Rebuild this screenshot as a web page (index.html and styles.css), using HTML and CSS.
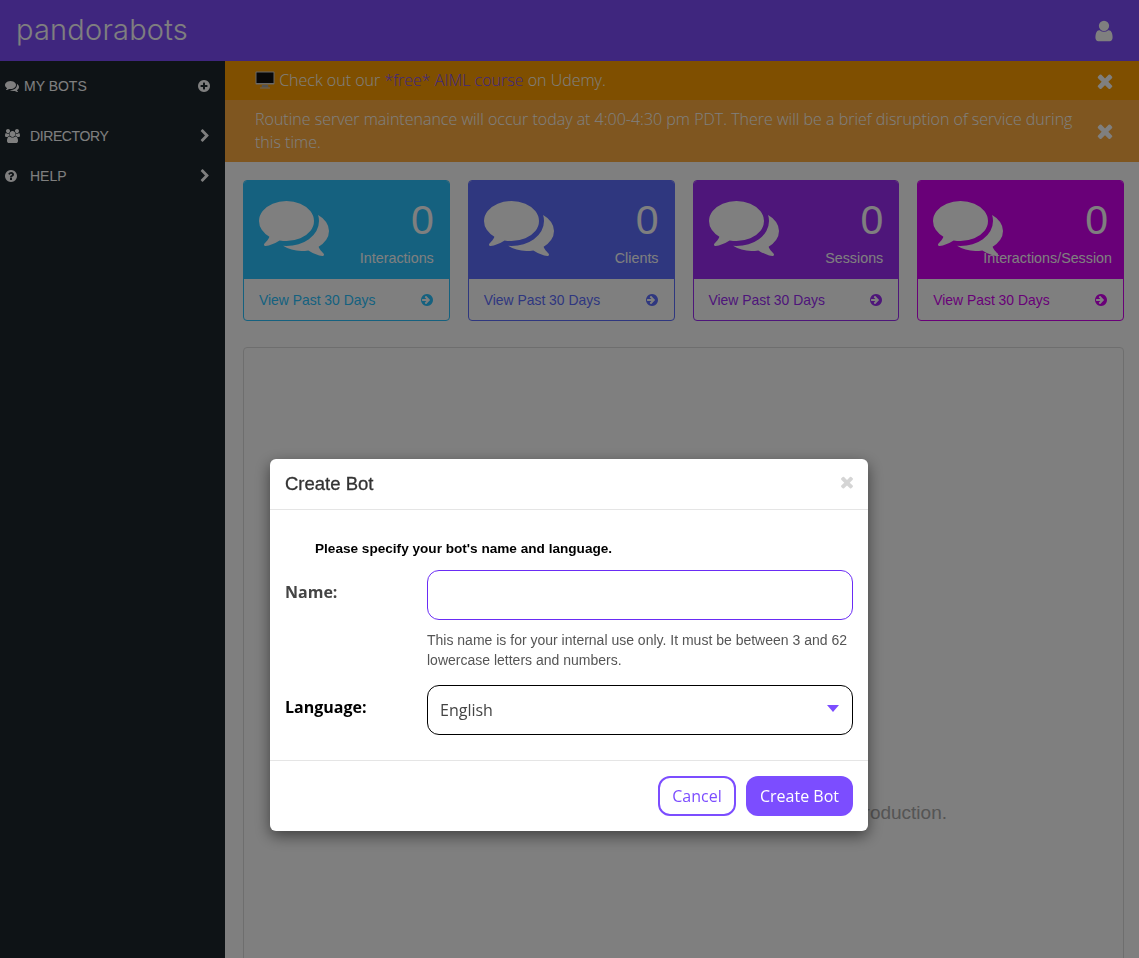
FILE: index.html
```html
<!DOCTYPE html>
<html>
	<head>
		<meta charset="UTF-8">
		<title>Pandorabots</title>
		<link rel="stylesheet" href="styles.css">
	</head>
	<body>
		<svg class="defs">
			<symbol id="i-comments" viewBox="0 0 1792 1792"><path d="M1408 768q0 139-94 257t-256.500 186.500-353.500 68.500q-86 0-176-16-124 88-278 128-36 9-86 16h-3q-11 0-20.500-8t-11.500-21q-1-3-1-6.500t.5-6.500 2-6l2.500-5 3.500-5.500 4-5 4.500-5 4-4.500q5-6 23-25t26-29.500 22.500-29 25-38.500 20.500-44q-124-72-195-177t-71-224q0-139 94-257t256.500-186.500 353.500-68.500 353.500 68.500 256.500 186.500 94 257zm384 256q0 120-71 224.500t-195 176.500q10 24 20.500 44t25 38.500 22.500 29 26 29.500 23 25q1 1 4 4.500t4.500 5 4 5 3.500 5.500l2.500 5 2 6 .5 6.500-1 6.500q-3 14-13 22t-22 7q-50-7-86-16-154-40-278-128-90 16-176 16-271 0-472-132 58 4 88 4 161 0 309-45t264-129q125-92 192-212t67-254q0-77-23-152 129 71 204 178t75 230z"/></symbol>
			<symbol id="i-plus" viewBox="0 0 1792 1792"><path d="M1344 960v-128q0-26-19-45t-45-19h-256v-256q0-26-19-45t-45-19h-128q-26 0-45 19t-19 45v256h-256q-26 0-45 19t-19 45v128q0 26 19 45t45 19h256v256q0 26 19 45t45 19h128q26 0 45-19t19-45v-256h256q26 0 45-19t19-45zm320-64q0 209-103 385.500t-279.500 279.500-385.500 103-385.500-103-279.500-279.500-103-385.500 103-385.500 279.500-279.500 385.500-103 385.500 103 279.500 279.500 103 385.500z"/></symbol>
			<symbol id="i-users" viewBox="0 0 1920 1792"><path d="M593 896q-162 5-265 128h-134q-82 0-138-40.500t-56-118.500q0-353 124-353 6 0 43.500 21t97.500 42.500 119 21.500q67 0 133-23-5 37-5 66 0 139 81 256zm1071 637q0 120-73 189.500t-194 69.500h-874q-121 0-194-69.500t-73-189.500q0-53 3.500-103.500t14-109 26.500-108.500 43-97.500 62-81 85.500-53.500 111.500-20q10 0 43 21.500t73 48 107 48 135 21.500 135-21.500 107-48 73-48 43-21.500q61 0 111.500 20t85.500 53.500 62 81 43 97.500 26.500 108.500 14 109 3.500 103.500zm-1024-1277q0 106-75 181t-181 75-181-75-75-181 75-181 181-75 181 75 75 181zm704 384q0 159-112.500 271.500t-271.500 112.500-271.500-112.500-112.500-271.500 112.500-271.500 271.500-112.500 271.500 112.500 112.500 271.500zm576 225q0 78-56 118.500t-138 40.500h-134q-103-123-265-128 81-117 81-256 0-29-5-66 66 23 133 23 59 0 119-21.500t97.500-42.500 43.500-21q124 0 124 353zm-128-609q0 106-75 181t-181 75-181-75-75-181 75-181 181-75 181 75 75 181z"/></symbol>
			<symbol id="i-chevron" viewBox="0 0 1792 1792"><path d="M1363 877l-742 742q-19 19-45 19t-45-19l-166-166q-19-19-19-45t19-45l531-531-531-531q-19-19-19-45t19-45l166-166q19-19 45-19t45 19l742 742q19 19 19 45t-19 45z"/></symbol>
			<symbol id="i-question" viewBox="0 0 1792 1792"><path d="M1024 1376v-192q0-14-9-23t-23-9h-192q-14 0-23 9t-9 23v192q0 14 9 23t23 9h192q14 0 23-9t9-23zm256-672q0-88-55.500-163t-138.500-116-170-41q-243 0-371 213-15 24 8 42l132 100q7 6 19 6 16 0 25-12 53-68 86-92 34-24 86-24 48 0 85.500 26t37.500 59q0 38-20 61t-68 45q-63 28-115.500 86.500t-52.500 125.500v36q0 14 9 23t23 9h192q14 0 23-9t9-23q0-19 21.500-49.500t54.500-49.500q32-18 49-28.500t46-35 44.500-48 28-60.500 12.500-81zm384 192q0 209-103 385.500t-279.500 279.500-385.500 103-385.500-103-279.500-279.500-103-385.500 103-385.500 279.500-279.500 385.500-103 385.500 103 279.500 279.500 103 385.500z"/></symbol>
			<symbol id="i-user" viewBox="0 0 1792 1792"><path d="M1536 1399q0 109-62.500 187t-150.500 78h-854q-88 0-150.500-78t-62.500-187q0-85 8.500-160.500t31.500-152 58.500-131 94-89 134.500-34.500q131 128 313 128t313-128q76 0 134.500 34.500t94 89 58.500 131 31.500 152 8.500 160.500zm-256-887q0 159-112.500 271.500t-271.500 112.500-271.500-112.500-112.500-271.500 112.500-271.500 271.500-112.500 271.500 112.500 112.500 271.500z"/></symbol>
			<symbol id="i-times" viewBox="0 0 1792 1792"><path d="M1490 1322q0 40-28 68l-136 136q-28 28-68 28t-68-28l-294-294-294 294q-28 28-68 28t-68-28l-136-136q-28-28-28-68t28-68l294-294-294-294q-28-28-28-68t28-68l136-136q28-28 68-28t68 28l294 294 294-294q28-28 68-28t68 28l136 136q28 28 28 68t-28 68l-294 294 294 294q28 28 28 68z"/></symbol>
			<symbol id="i-arrow" viewBox="0 0 1792 1792"><path d="M1285 896q0-27-18-45l-91-91-362-362q-18-18-45-18t-45 18l-91 91q-18 18-18 45t18 45l189 189h-502q-26 0-45 19t-19 45v128q0 26 19 45t45 19h502l-189 189q-19 19-19 45t19 45l91 91q18 18 45 18t45-18l362-362 91-91q18-18 18-45zm379 0q0 209-103 385.500t-279.500 279.500-385.500 103-385.500-103-279.500-279.500-103-385.500 103-385.500 279.500-279.500 385.500-103 385.500 103 279.500 279.500 103 385.500z"/></symbol>
		</svg>

		<header class="topbar">
			<span class="logo">pandorabots</span>
			<svg class="user-icon"><use href="#i-user"/></svg>
		</header>

		<div class="layout">
			<!--sidebar-->
			<nav class="sidebar">
				<div class="nav-item nav-bots">
					<svg class="nav-icon"><use href="#i-comments"/></svg>
					<span class="nav-label">MY BOTS</span>
					<svg class="nav-add"><use href="#i-plus"/></svg>
				</div>
				<div class="nav-item nav-directory">
					<svg class="nav-icon nav-icon-wide"><use href="#i-users"/></svg>
					<span class="nav-label">DIRECTORY</span>
					<svg class="nav-chevron"><use href="#i-chevron"/></svg>
				</div>
				<div class="nav-item nav-help">
					<svg class="nav-icon nav-icon-help"><use href="#i-question"/></svg>
					<span class="nav-label">HELP</span>
					<svg class="nav-chevron"><use href="#i-chevron"/></svg>
				</div>
			</nav>

			<main class="content">
				<!--alerts-->
				<div class="alert alert-course">
					<p>
						<svg class="monitor" viewBox="0 0 20 18">
							<rect x="0.5" y="0.5" width="19" height="13" rx="1" fill="#cfcfcf"/>
							<rect x="1.5" y="1.5" width="17" height="10.500" fill="#111"/>
							<path d="M7 14h6l.5 2.500h-7z" fill="#a5a5a5"/>
							<rect x="5" y="16.500" width="10" height="1" fill="#c8c8c8"/>
						</svg>
						Check out our <a href="#">*free* AIML course</a> on Udemy.
					</p>
					<svg class="alert-close"><use href="#i-times"/></svg>
				</div>
				<div class="alert alert-notice">
					<p>Routine server maintenance will occur today at 4:00-4:30 pm PDT. There will be a brief disruption of service during this time.</p>
					<svg class="alert-close"><use href="#i-times"/></svg>
				</div>

				<!--stat cards-->
				<div class="stats">
					<div class="card card-cyan">
						<div class="card-top">
							<svg class="card-icon"><use href="#i-comments"/></svg>
							<div class="card-value">0</div>
							<div class="card-label">Interactions</div>
						</div>
						<div class="card-foot">
							<span>View Past 30 Days</span>
							<svg class="card-arrow"><use href="#i-arrow"/></svg>
						</div>
					</div>
					<div class="card card-blue">
						<div class="card-top">
							<svg class="card-icon"><use href="#i-comments"/></svg>
							<div class="card-value">0</div>
							<div class="card-label">Clients</div>
						</div>
						<div class="card-foot">
							<span>View Past 30 Days</span>
							<svg class="card-arrow"><use href="#i-arrow"/></svg>
						</div>
					</div>
					<div class="card card-purple">
						<div class="card-top">
							<svg class="card-icon"><use href="#i-comments"/></svg>
							<div class="card-value">0</div>
							<div class="card-label">Sessions</div>
						</div>
						<div class="card-foot">
							<span>View Past 30 Days</span>
							<svg class="card-arrow"><use href="#i-arrow"/></svg>
						</div>
					</div>
					<div class="card card-magenta">
						<div class="card-top">
							<svg class="card-icon"><use href="#i-comments"/></svg>
							<div class="card-value">0</div>
							<div class="card-label">Interactions/Session</div>
						</div>
						<div class="card-foot">
							<span>View Past 30 Days</span>
							<svg class="card-arrow"><use href="#i-arrow"/></svg>
						</div>
					</div>
				</div>

				<div class="panel">
					<p class="panel-text">production.</p>
				</div>
			</main>
		</div>

		<!--create bot dialog-->
		<div class="overlay">
			<div class="modal">
				<div class="modal-head">
					<h4>Create Bot</h4>
					<svg class="modal-close"><use href="#i-times"/></svg>
				</div>
				<div class="modal-body">
					<p class="intro">Please specify your bot's name and language.</p>
					<div class="field field-name">
						<label class="field-label">Name:</label>
						<div class="field-main">
							<input class="text-input" type="text">
							<p class="help">This name is for your internal use only. It must be between 3 and 62 lowercase letters and numbers.</p>
						</div>
					</div>
					<div class="field field-language">
						<label class="field-label">Language:</label>
						<div class="field-main">
							<div class="select">
								<span>English</span>
								<span class="caret"></span>
							</div>
						</div>
					</div>
				</div>
				<div class="modal-foot">
					<button class="btn btn-cancel">Cancel</button>
					<button class="btn btn-create">Create Bot</button>
				</div>
			</div>
		</div>
	</body>
</html>
```

FILE: styles.css
```css
* {
	box-sizing: border-box;
}
html, body {
	height: 100%;
}
body {
	margin: 0;
	overflow: hidden;
	background: #fff;
	font-family: "Liberation Sans", Arial, sans-serif;
	color: #333;
}
p, h4 {
	margin: 0;
}
.defs {
	display: none;
}
svg {
	fill: currentColor;
	display: block;
}

/* top bar */
.topbar {
	height: 61px;
	background: #7e4dfc;
	color: #fff;
	display: flex;
	align-items: center;
	justify-content: space-between;
	padding: 0 23px 0 16px;
}
.logo {
	font-family: Inter, sans-serif;
	font-size: 29px;
	font-weight: 300;
	letter-spacing: 0.2px;
	position: relative;
	top: -1px;
}
.user-icon {
	width: 24px;
	height: 24px;
}

.layout {
	display: flex;
	height: calc(100% - 61px);
}

/* sidebar */
.sidebar {
	width: 225px;
	flex-shrink: 0;
	background: #1c262d;
	color: #fff;
	font-size: 14px;
}
.nav-item {
	display: flex;
	align-items: center;
	height: 40px;
	padding-left: 5px;
}
.nav-bots {
	margin-top: 5px;
}
.nav-directory {
	margin-top: 10px;
}
.nav-directory .nav-label {
	letter-spacing: -0.4px;
}
.nav-icon {
	width: 14px;
	height: 14px;
	margin-right: 5px;
}
.nav-icon-wide {
	width: 15px;
	margin-right: 10px;
}
.nav-icon-help {
	margin-left: -1px;
	margin-right: 12px;
}
.nav-label {
	flex: 1;
}
.nav-add {
	width: 14px;
	height: 14px;
	margin-right: 14px;
}
.nav-chevron {
	width: 14px;
	height: 14px;
	margin-right: 13px;
}

/* alerts */
.content {
	flex: 1;
	min-width: 0;
	overflow: hidden;
}
.alert {
	display: flex;
	align-items: center;
	justify-content: space-between;
	padding: 8px 23px 8px 30px;
	font-family: "Open Sans", sans-serif;
	font-size: 16px;
	font-weight: 300;
	line-height: 23px;
	color: #fff;
}
.alert p {
	width: 825px;
}
.alert-course {
	background: #ff9f00;
}
.alert-notice {
	background: #ffad40;
}
.alert a {
	color: #7e4dfc;
	text-decoration: none;
}
.monitor {
	display: inline-block;
	width: 20px;
	height: 18px;
	vertical-align: -3px;
}
.alert-close {
	width: 22px;
	height: 22px;
	margin: -2px 0;
}

/* stat cards */
.stats {
	display: grid;
	grid-template-columns: repeat(4, 1fr);
	gap: 18px;
	padding: 18px 15px 0 18px;
}
.card {
	height: 141px;
	border: 1px solid;
	border-radius: 4px;
	overflow: hidden;
}
.card-top {
	height: 98px;
	padding: 4px 15px 0 15px;
	color: #fff;
	position: relative;
	text-align: right;
}
.card-icon {
	position: absolute;
	left: 15px;
	top: 10px;
	width: 70px;
	height: 70px;
}
.card-value {
	font-size: 41px;
	line-height: 70px;
	height: 61px;
	position: relative;
}
.card-label {
	font-size: 14.3px;
	line-height: 20px;
	margin-top: 2px;
	white-space: nowrap;
	position: relative;
}
.card-magenta .card-label {
	margin-right: -4px;
}
.card-foot {
	display: flex;
	align-items: center;
	justify-content: space-between;
	height: 41px;
	padding: 0 15px;
	font-size: 13.9px;
}
.card-arrow {
	width: 14px;
	height: 14px;
}
.card-cyan {
	border-color: #2ac3fe;
	color: #2ac3fe;
}
.card-cyan .card-top {
	background: #2ac3fe;
}
.card-blue {
	border-color: #5e6efe;
	color: #5e6efe;
}
.card-blue .card-top {
	background: #5e6efe;
}
.card-purple {
	border-color: #9c2cf4;
	color: #9c2cf4;
}
.card-purple .card-top {
	background: #9c2cf4;
}
.card-magenta {
	border-color: #d200f0;
	color: #d200f0;
}
.card-magenta .card-top {
	background: #d200f0;
}

.panel {
	margin: 26px 15px 0 18px;
	height: 700px;
	border: 1px solid #ddd;
	border-radius: 4px;
	padding: 454px 176px 0 0;
}
.panel-text {
	text-align: right;
	font-size: 19px;
	line-height: 22px;
	color: #aaa;
}

/* dialog */
.overlay {
	position: fixed;
	inset: 0;
	background: rgba(0, 0, 0, 0.5);
	padding: 459px 0 0 270px;
}
.modal {
	width: 598px;
	height: 372px;
	background: #fff;
	border-radius: 6px;
	box-shadow: 0 5px 15px rgba(0, 0, 0, 0.5);
}
.modal-head {
	height: 51px;
	border-bottom: 1px solid #e5e5e5;
	display: flex;
	align-items: center;
	justify-content: space-between;
	padding: 0 12px 0 15px;
}
.modal-head h4 {
	font-size: 18.5px;
	font-weight: 500;
	color: #333;
	-webkit-text-stroke: 0.3px #333;
}
.modal-close {
	width: 18px;
	height: 18px;
	color: #d5d5d5;
	margin-top: -4px;
}
.modal-body {
	height: 251px;
	padding: 30px 15px 0 15px;
	border-bottom: 1px solid #e5e5e5;
}
.intro {
	padding-left: 30px;
	font-size: 13.6px;
	font-weight: bold;
	line-height: 18px;
	color: #000;
}
.field {
	display: flex;
}
.field-name {
	margin-top: 12px;
}
.field-language {
	margin-top: 15px;
}
.field-label {
	width: 142px;
	flex-shrink: 0;
	font-family: "Open Sans", sans-serif;
	font-size: 16px;
	font-weight: bold;
	line-height: 20px;
	padding-top: 12px;
	color: #444;
}
.field-language .field-label {
	color: #000;
}
.field-main {
	flex: 1;
}
.text-input {
	display: block;
	width: 100%;
	height: 50px;
	border: 1px solid #6a2cf5;
	border-radius: 12px;
	background: #fff;
	outline: none;
}
.help {
	font-size: 14px;
	line-height: 20px;
	color: #555;
	margin-top: 10px;
}
.select {
	height: 50px;
	border: 1px solid #000;
	border-radius: 12px;
	display: flex;
	align-items: center;
	justify-content: space-between;
	padding: 0 13px 0 12px;
	font-family: "Open Sans", sans-serif;
	font-size: 16px;
	color: #444;
}
.caret {
	width: 0;
	height: 0;
	border-left: 6px solid transparent;
	border-right: 6px solid transparent;
	border-top: 7px solid #7c4dff;
	margin-top: -4px;
}
.modal-foot {
	display: flex;
	justify-content: flex-end;
	gap: 10px;
	padding: 15px 15px 0 0;
}
.btn {
	height: 40px;
	border-radius: 12px;
	font-family: "Open Sans", sans-serif;
	font-size: 16px;
	padding: 0;
}
.btn-cancel {
	width: 78px;
	background: #fff;
	border: 2px solid #7c4dff;
	color: #7c4dff;
}
.btn-create {
	width: 107px;
	background: #7c4dff;
	border: none;
	color: #fff;
}
```
